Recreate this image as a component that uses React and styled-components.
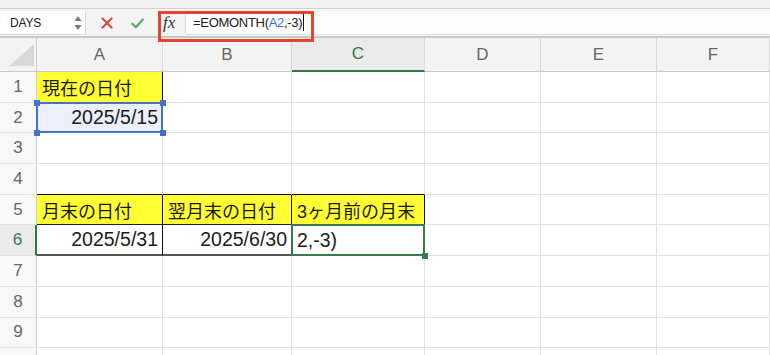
import React from "react";
import styled, { createGlobalStyle, css } from "styled-components";

/* ---------- page ---------- */
const GlobalStyle = createGlobalStyle`
  html, body { margin: 0; padding: 0; background: #fff; }
  body {
    width: 770px;
    height: 355px;
    overflow: hidden;
    font-family: "Liberation Sans", "Noto Sans CJK JP", sans-serif;
  }
`;

const Page = styled.div`
  position: relative;
  width: 770px;
  height: 355px;
  overflow: hidden;
`;

const TopStrip = styled.div`
  height: 8px;
  background: #efefef;
  border-bottom: 1px solid #d3d3d3;
`;

/* ---------- formula bar ---------- */
const FormulaBar = styled.div`
  display: flex;
  height: 24px;
  padding: 2px 0 1px;
  background: #f4f4f4;
  border-bottom: 2px solid #c8c8c8;
`;

const NameBox = styled.div`
  width: 86px;
  box-sizing: border-box;
  display: flex;
  align-items: center;
  justify-content: space-between;
  padding: 0 3px 0 10px;
  background: #fff;
  border-right: 1px solid #d6d6d6;
  border-bottom: 1px solid #d6d6d6;
  font-size: 12px;
  letter-spacing: -0.2px;
  color: #222;
`;

const Actions = styled.div`
  width: 72px;
  display: flex;
  align-items: center;
  gap: 18px;
  padding-left: 15px;
  box-sizing: border-box;
`;

const FxBox = styled.div`
  width: 28px;
  box-sizing: border-box;
  display: flex;
  align-items: center;
  padding-left: 5px;
  position: relative;
  font-family: "Liberation Serif", "DejaVu Serif", serif;
  font-style: italic;
  font-size: 17px;
  color: #333;
  &::after {
    content: "";
    position: absolute;
    right: 0;
    top: 2px;
    bottom: 2px;
    width: 1px;
    background: #d8d8d8;
  }
`;

const Input = styled.div`
  flex: 1;
  display: flex;
  align-items: center;
  padding-left: 7px;
  background: #fdfdfd;
  border-bottom: 1px solid #e0e0e0;
  font-size: 13px;
  letter-spacing: -0.3px;
  color: #222;
`;

const Ref = styled.span`
  color: #3b6fd4;
`;

const Caret = styled.span`
  display: inline-block;
  width: 1px;
  height: 17px;
  margin-left: 1px;
  background: #111;
`;

const RedFrame = styled.div`
  position: absolute;
  left: 158px;
  top: 11px;
  width: 156px;
  height: 31px;
  box-sizing: border-box;
  border: 3px solid #e4432d;
  pointer-events: none;
`;

/* ---------- sheet ---------- */
const Sheet = styled.div`
  display: grid;
  grid-template-columns: 37px 126px 129px 133px 116px 116px 1fr;
  grid-template-rows: 34px repeat(10, 30.7px);
`;

const Corner = styled.div`
  display: flex;
  align-items: flex-end;
  justify-content: flex-end;
  padding: 0 2px 5px 0;
  background: #f3f3f3;
  border-right: 1px solid #cfcfcf;
  border-bottom: 1px solid #c9c9c9;
`;

const ColHead = styled.div`
  display: flex;
  align-items: center;
  justify-content: center;
  background: #f3f3f3;
  border-right: 1px solid #dadada;
  border-bottom: 1px solid #c9c9c9;
  font-size: 17px;
  color: #666;
  ${(p) =>
    p.$active &&
    css`
      background: #ebebeb;
      color: #2f7a47;
      border-bottom: 2px solid #2f7a47;
    `}
`;

const RowHead = styled.div`
  display: flex;
  align-items: center;
  justify-content: center;
  background: #f8f8f8;
  border-right: 1px solid #cfcfcf;
  border-bottom: 1px solid #e2e2e2;
  font-size: 17px;
  color: #666;
  ${(p) =>
    p.$active &&
    css`
      background: #ebebeb;
      color: #2f7a47;
      border-right: 2px solid #2f7a47;
    `}
`;

const Cell = styled.div`
  position: relative;
  display: flex;
  align-items: center;
  justify-content: ${(p) => (p.$align === "right" ? "flex-end" : "flex-start")};
  padding: 0 4px 0 5px;
  background: ${(p) => p.$fill || "#fff"};
  border-right: 1px solid ${(p) => p.$r || "#e1e1e1"};
  border-bottom: ${(p) => p.$bw || 1}px solid ${(p) => p.$b || "#e1e1e1"};
  font-size: ${(p) => (p.$num ? "19.5px" : "18px")};
  color: #1b1b1b;
  white-space: nowrap;
`;

const Selection = styled.span`
  position: absolute;
  top: -1px;
  left: -1px;
  right: -1px;
  bottom: -1px;
  border: 2px solid ${(p) => p.$color};
  pointer-events: none;
`;

const Handle = styled.i`
  position: absolute;
  z-index: 1;
  width: 6px;
  height: 6px;
  background: ${(p) => p.$color};
  ${(p) => (p.$y === "t" ? "top: -3px;" : "bottom: -4px;")}
  ${(p) => (p.$x === "l" ? "left: -3px;" : "right: -4px;")}
`;

const YELLOW = "#ffff33";
const BLUE = "#4472c4";
const GREEN = "#3a7a4c";

const COLS = ["A", "B", "C", "D", "E", "F"];

const CELLS = {
  A1: { text: "現在の日付", fill: YELLOW, r: "#111" },
  A2: { text: "2025/5/15", num: true, align: "right", fill: "#eaeff9", sel: BLUE, handles: ["tl", "tr", "bl", "br"] },
  A4: { b: "#111" },
  B4: { b: "#111" },
  C4: { b: "#111" },
  A5: { text: "月末の日付", fill: YELLOW, r: "#111", b: "#222" },
  B5: { text: "翌月末の日付", fill: YELLOW, r: "#111", b: "#222" },
  C5: { text: "3ヶ月前の月末", fill: YELLOW, r: "#111", b: "#222" },
  A6: { text: "2025/5/31", num: true, align: "right", r: "#111", b: "#555", bw: 2 },
  B6: { text: "2025/6/30", num: true, align: "right", r: "#111", b: "#555", bw: 2 },
  C6: { text: "2,-3)", num: true, sel: GREEN, handles: ["br"] },
};

function StepperIcon() {
  return (
    <svg width="8" height="16" viewBox="0 0 8 16">
      <path d="M4 1 L7.5 6 H0.5 Z" fill="#7a7a7a" />
      <path d="M4 15 L7.5 10 H0.5 Z" fill="#7a7a7a" />
    </svg>
  );
}

function CancelIcon() {
  return (
    <svg width="12" height="12" viewBox="0 0 12 12">
      <path d="M1.5 1.5 L10.5 10.5 M10.5 1.5 L1.5 10.5" stroke="#d64a43" strokeWidth="2.2" strokeLinecap="round" />
    </svg>
  );
}

function ConfirmIcon() {
  return (
    <svg width="13" height="11" viewBox="0 0 13 11">
      <path d="M1.3 5.8 L4.8 9.3 L11.8 1.5" fill="none" stroke="#5aa85c" strokeWidth="2.2" strokeLinecap="round" strokeLinejoin="round" />
    </svg>
  );
}

function CornerTriangle() {
  return (
    <svg width="25" height="22" viewBox="0 0 25 22">
      <path d="M0 22 H25 V0 Z" fill="#d8d8d8" />
    </svg>
  );
}

export default function App() {
  const rows = Array.from({ length: 10 }, (_, i) => i + 1);
  return (
    <>
      <GlobalStyle />
      <Page>
        <TopStrip />
        <FormulaBar>
          <NameBox>
            DAYS
            <StepperIcon />
          </NameBox>
          <Actions>
            <CancelIcon />
            <ConfirmIcon />
          </Actions>
          <FxBox>fx</FxBox>
          <Input>
            =EOMONTH(<Ref>A2</Ref>,-3)
            <Caret />
          </Input>
        </FormulaBar>

        <Sheet>
          <Corner>
            <CornerTriangle />
          </Corner>
          {COLS.map((c) => (
            <ColHead key={c} $active={c === "C"}>
              {c}
            </ColHead>
          ))}
          {rows.map((r) => (
            <React.Fragment key={r}>
              {/* row 10 sits under the bottom edge, its number is out of view */}
              <RowHead $active={r === 6}>{r < 10 ? r : null}</RowHead>
              {COLS.map((c) => {
                const d = CELLS[c + r] || {};
                return (
                  <Cell
                    key={c + r}
                    $fill={d.fill}
                    $align={d.align}
                    $num={d.num}
                    $r={d.r}
                    $b={d.b}
                    $bw={d.bw}
                  >
                    {d.text}
                    {d.sel && <Selection $color={d.sel} />}
                    {(d.handles || []).map((h) => (
                      <Handle key={h} $color={d.sel} $y={h[0]} $x={h[1]} />
                    ))}
                  </Cell>
                );
              })}
            </React.Fragment>
          ))}
        </Sheet>

        <RedFrame />
      </Page>
    </>
  );
}
